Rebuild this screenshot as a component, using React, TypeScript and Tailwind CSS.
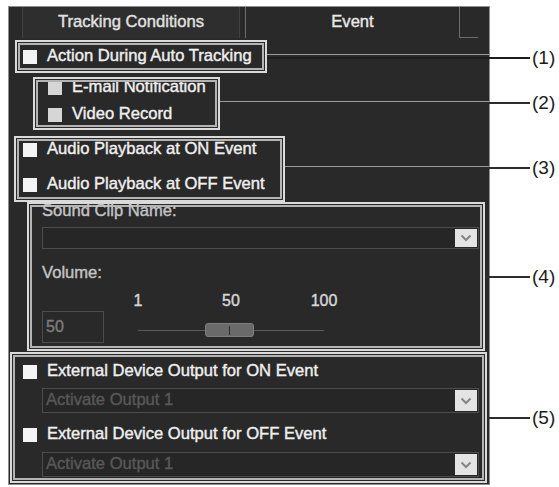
import type { ReactNode } from 'react'

const Chevron = () => (
  <svg width="12" height="8" viewBox="0 0 12 8">
    <path d="M1.5 1.5 L6 6 L10.5 1.5" stroke="#858585" strokeWidth="2" fill="none" />
  </svg>
)

// two thin light frames with a dark gap between them
function DoubleBox({ className = '', inner = '', children }: { className?: string; inner?: string; children: ReactNode }) {
  return (
    <div className={`border-2 border-[#dadada] p-px ${className}`}>
      <div className={`h-full border-2 border-[#b4b4b4] ${inner}`}>{children}</div>
    </div>
  )
}

function Check({ label, dim = false }: { label: string; dim?: boolean }) {
  return (
    <div className="flex items-center h-[16px] gap-[10px] whitespace-nowrap">
      <span className={`w-[14px] h-[14px] shrink-0 ${dim ? 'bg-[#d6d6d6]' : 'bg-[#f4f4f4]'}`} />
      <span className="text-[16.6px] leading-none text-[#f0f0f0] -mt-px">{label}</span>
    </div>
  )
}

function Select({ value = '', className = '' }: { value?: string; className?: string }) {
  return (
    <div className={`flex items-stretch border border-[#4c4c4c] bg-[#262626] ${className}`}>
      <span className="flex-1 pl-[3px] flex items-center text-[16.6px] leading-none text-[#585858] whitespace-nowrap">{value}</span>
      <span className="w-[22px] my-px mr-px bg-[#e4e4e4] flex items-center justify-center">
        <Chevron />
      </span>
    </div>
  )
}

export default function App() {
  return (
    <div className="relative w-[559px] h-[487px] bg-white overflow-hidden font-['Liberation_Sans',Arial,sans-serif]">
      <div className="ml-[8px] mt-[6px] w-[482px] h-[479px] bg-[#292929] border border-[#8e8e8e] flex flex-col [-webkit-text-stroke:0.4px_currentColor]">
        {/* tabs */}
        <div className="flex h-[31px] shrink-0">
          <div className="ml-[13px] w-[218px] border-x border-[#414141] bg-[#2e2e2e] flex items-center justify-center text-[16.6px] text-[#e2e2e2]">
            Tracking Conditions
          </div>
          <div className="ml-[5px] w-[215px] border-x border-[#6c6c6c] flex items-center justify-center text-[16.6px] text-[#e8e8e8]">
            Event
          </div>
          <div className="w-[18px] border-b border-[#6c6c6c]" />
        </div>

        <DoubleBox className="ml-[6px] mt-[2px] w-[252px] h-[33px] shrink-0" inner="flex items-center pl-[3px]">
          <Check label="Action During Auto Tracking" />
        </DoubleBox>

        <DoubleBox className="ml-[24px] mt-[4px] w-[187px] h-[53px] shrink-0" inner="overflow-hidden flex flex-col pl-[10px]">
          <div className="-mt-[2px]">
            <Check label="E-mail Notification" dim />
          </div>
          <div className="mt-[11px]">
            <Check label="Video Record" dim />
          </div>
        </DoubleBox>

        <DoubleBox className="ml-[5px] mt-[6px] w-[271px] h-[66px] shrink-0" inner="flex flex-col pl-[4px] pt-px gap-[19px]">
          <Check label="Audio Playback at ON Event" />
          <Check label="Audio Playback at OFF Event" />
        </DoubleBox>

        <DoubleBox className="ml-[18px] w-[458px] h-[149px] shrink-0" inner="flex flex-col pl-[10px] pr-px">
          <div className="-mt-[4px] h-[16px] flex items-center text-[16.6px] leading-none text-[#c4c4c4]">Sound Clip Name:</div>
          <Select className="mt-[8px] h-[22px]" />
          <div className="mt-[16px] h-[16px] flex items-center text-[16.6px] leading-none text-[#c4c4c4]">Volume:</div>
          <div className="flex">
            <div className="mt-[30px] w-[62px] h-[32px] border border-[#4c4c4c] pl-[3px] flex items-center text-[16px] leading-none text-[#7c7c7c]">
              50
            </div>
            <div className="ml-[14px] w-[226px] mt-[12px]">
              <div className="flex justify-between h-[16px] items-center text-[16px] leading-none text-[#d6d6d6]">
                <span className="w-[40px] text-center">1</span>
                <span className="w-[40px] text-center">50</span>
                <span className="w-[40px] text-center">100</span>
              </div>
              <div className="relative mx-[20px] mt-[14px] h-[14px] flex items-center">
                <div className="w-full h-px bg-[#5c5c5c]" />
                <div className="absolute left-[67px] top-0 w-[49px] h-[14px] rounded-[3px] bg-[#6a6a6a] border border-[#7e7e7e] flex items-center justify-center">
                  <span className="w-px h-[9px] bg-[#2a2a2a]" />
                </div>
              </div>
            </div>
          </div>
        </DoubleBox>

        <DoubleBox className="ml-px mt-px w-[477px] h-[131px] shrink-0" inner="flex flex-col pl-[8px] pt-[7px]">
          <Check label="External Device Output for ON Event" />
          <Select value="Activate Output 1" className="mt-[8px] ml-[19px] mr-[3px] h-[25px]" />
          <div className="mt-[14px]">
            <Check label="External Device Output for OFF Event" />
          </div>
          <Select value="Activate Output 1" className="mt-[9px] ml-[19px] mr-[3px] h-[25px]" />
        </DoubleBox>
      </div>

      {/* callout leaders */}
      <div className="absolute left-[267px] top-[54px] w-[222px] h-px bg-[#9c9c9c]" />
      <div className="absolute left-[267px] top-[57px] w-[263px] h-[2px] bg-[#1c1c1c]" />
      <div className="absolute left-[220px] top-[101px] w-[269px] h-px bg-[#9c9c9c]" />
      <div className="absolute left-[489px] top-[102px] w-[41px] h-[2px] bg-[#2c2c2c]" />
      <div className="absolute left-[285px] top-[166px] w-[204px] h-px bg-[#9c9c9c]" />
      <div className="absolute left-[489px] top-[167px] w-[41px] h-[2px] bg-[#2c2c2c]" />
      <div className="absolute left-[485px] top-[276px] w-[45px] h-[2px] bg-[#2c2c2c]" />
      <div className="absolute left-[487px] top-[417px] w-[43px] h-[2px] bg-[#2c2c2c]" />

      <span className="absolute left-[532px] top-[48px] text-[19px] leading-none text-[#1c1c1c]">(1)</span>
      <span className="absolute left-[532px] top-[93px] text-[19px] leading-none text-[#1c1c1c]">(2)</span>
      <span className="absolute left-[532px] top-[158px] text-[19px] leading-none text-[#1c1c1c]">(3)</span>
      <span className="absolute left-[532px] top-[267px] text-[19px] leading-none text-[#1c1c1c]">(4)</span>
      <span className="absolute left-[532px] top-[408px] text-[19px] leading-none text-[#1c1c1c]">(5)</span>
    </div>
  )
}
